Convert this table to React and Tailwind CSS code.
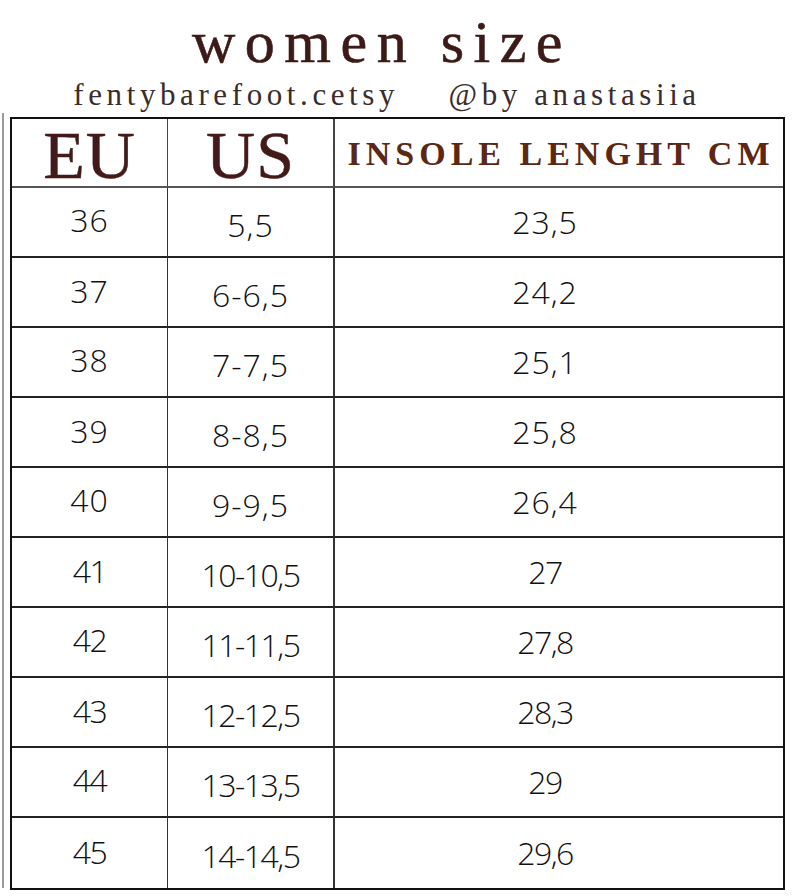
const rows = [
  ["36", "5,5", "23,5"],
  ["37", "6-6,5", "24,2"],
  ["38", "7-7,5", "25,1"],
  ["39", "8-8,5", "25,8"],
  ["40", "9-9,5", "26,4"],
  ["41", "10-10,5", "27"],
  ["42", "11-11,5", "27,8"],
  ["43", "12-12,5", "28,3"],
  ["44", "13-13,5", "29"],
  ["45", "14-14,5", "29,6"],
]

const serif = { fontFamily: '"Liberation Serif", "DejaVu Serif", serif' }
const sans = { fontFamily: '"Open Sans", "Liberation Sans", sans-serif' }

export default function App() {
  return (
    <div className="w-[794px] h-[896px] bg-white overflow-hidden">
      {/* title */}
      <div className="h-[113px] flex flex-col items-center" style={serif}>
        <h1 className="text-[60px] leading-none tracking-[9.5px] text-[#3b1a18] mt-[12px] pr-[30px] [-webkit-text-stroke:0.6px_#3b1a18]">
          women size
        </h1>
        <p className="text-[31px] leading-none tracking-[4.6px] text-[#3a2c2a] mt-[7px] pr-[20px]">
          fentybarefoot.cetsy&nbsp;&nbsp;&nbsp; @by anastasiia
        </p>
      </div>

      <div className="ml-[2px] w-[788px] h-[775px] border-l-2 border-[#9a9a9a] pt-[4px] pl-[6px]">
        <div className="w-[775px] border-2 border-[#111] grid grid-cols-[156px_167px_448px]">
          {/* header */}
          <div className="h-[69px] flex items-center justify-center border-r border-[#444] border-b-2 border-b-[#555]" style={serif}>
            <span className="text-[68px] leading-none text-[#431a1a] tracking-[1px] mt-[4px] [-webkit-text-stroke:0.5px_#431a1a]">EU</span>
          </div>
          <div className="h-[69px] flex items-center justify-center border-r-2 border-[#444] border-b-2 border-b-[#555]" style={serif}>
            <span className="text-[68px] leading-none text-[#431a1a] tracking-[1px] mt-[4px] [-webkit-text-stroke:0.5px_#431a1a]">US</span>
          </div>
          <div className="h-[69px] flex items-center justify-center border-b-2 border-b-[#555]" style={serif}>
            <span className="text-[34px] font-bold leading-none text-[#5a2814] tracking-[5px] mt-[2px] pl-[4px]">INSOLE LENGHT CM</span>
          </div>

          {rows.map((r, i) => {
            const last = i === rows.length - 1
            const bottom = last ? "" : "border-b-2 border-b-[#222]"
            const txt = i >= 5 ? "text-[32px] tracking-[-1.5px]" : "text-[32px] tracking-[1px]"
            return [
              <div
                key={r[0] + "a"}
                className={`h-[70px] flex items-center justify-center border-r border-[#333] ${bottom}`}
                style={sans}
              >
                <span className={`${txt} font-light text-[#111] ${i % 2 === 0 ? "-mt-[4px]" : "-mt-[2px]"}`}>{r[0]}</span>
              </div>,
              <div
                key={r[0] + "b"}
                className={`h-[70px] flex items-center justify-center border-r-2 border-[#333] ${bottom}`}
                style={sans}
              >
                <span className={`${txt} font-light text-[#111] mt-[6px]`}>{r[1]}</span>
              </div>,
              <div
                key={r[0] + "c"}
                className={`h-[70px] flex items-center justify-center pr-[28px] ${bottom}`}
                style={sans}
              >
                <span className={`${txt} font-light text-[#111]`}>{r[2]}</span>
              </div>,
            ]
          })}
        </div>
      </div>
    </div>
  )
}
